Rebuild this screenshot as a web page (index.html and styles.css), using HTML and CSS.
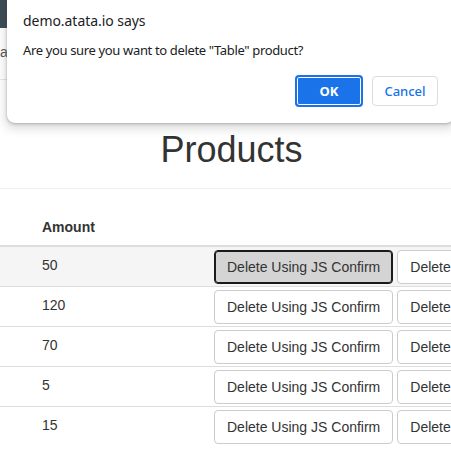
FILE: index.html
```html
<!DOCTYPE html>
<html lang="en">
<head>
    <meta charset="UTF-8">
    <title>Products</title>
    <link rel="stylesheet" href="styles.css">
</head>
<body>
    <div class="navbar"></div>
    <div class="subbar"><span class="crumb">al</span></div>

    <div class="main">
        <div class="page-header">
            <h1>Products</h1>
        </div>
        <table class="table">
            <colgroup>
                <col class="col-amount">
                <col class="col-actions">
            </colgroup>
            <thead>
                <tr>
                    <th class="amount">Amount</th>
                    <th></th>
                </tr>
            </thead>
            <tbody>
                <tr class="hover">
                    <td class="amount">50</td>
                    <td class="actions">
                        <div class="btns">
                            <button class="btn active">Delete Using JS Confirm</button>
                            <button class="btn">Delete Using Bootstrap Modal</button>
                        </div>
                    </td>
                </tr>
                <tr>
                    <td class="amount">120</td>
                    <td class="actions">
                        <div class="btns">
                            <button class="btn">Delete Using JS Confirm</button>
                            <button class="btn">Delete Using Bootstrap Modal</button>
                        </div>
                    </td>
                </tr>
                <tr>
                    <td class="amount">70</td>
                    <td class="actions">
                        <div class="btns">
                            <button class="btn">Delete Using JS Confirm</button>
                            <button class="btn">Delete Using Bootstrap Modal</button>
                        </div>
                    </td>
                </tr>
                <tr>
                    <td class="amount">5</td>
                    <td class="actions">
                        <div class="btns">
                            <button class="btn">Delete Using JS Confirm</button>
                            <button class="btn">Delete Using Bootstrap Modal</button>
                        </div>
                    </td>
                </tr>
                <tr>
                    <td class="amount">15</td>
                    <td class="actions">
                        <div class="btns">
                            <button class="btn">Delete Using JS Confirm</button>
                            <button class="btn">Delete Using Bootstrap Modal</button>
                        </div>
                    </td>
                </tr>
            </tbody>
        </table>
    </div>

    <!-- browser confirm dialog, drawn over the page -->
    <div class="dialog">
        <div class="dialog-title">demo.atata.io says</div>
        <div class="dialog-message">Are you sure you want to delete "Table" product?</div>
        <div class="dialog-buttons">
            <button class="dialog-ok">OK</button>
            <button class="dialog-cancel">Cancel</button>
        </div>
    </div>
</body>
</html>
```

FILE: styles.css
```css
body {
    font-family: 'Liberation Sans', Arial, sans-serif;
    font-size: 14px;
    line-height: 20px;
    color: #333;
    background: #fff;
    margin: 0;
    padding: 0;
    width: 451px;
    height: 469px;
    overflow: hidden;
    position: relative;
}
.navbar {
    height: 28px;
    background-color: #3c4a54;
}
.subbar {
    padding: 14px 0 17px;
    border-bottom: 1px solid #e7e7e7;
    color: #555;
}
.main {
    width: 463px;
}
.page-header {
    padding-bottom: 18px;
    border-bottom: 1px solid #eee;
    text-align: center;
}
.page-header h1 {
    margin: 50px 0 0;
    font-size: 36px;
    line-height: 1.1;
    font-weight: 500;
    color: #333;
}
.table {
    width: 463px;
    margin-top: 20px;
    border-collapse: collapse;
    table-layout: fixed;
}
.col-amount {
    width: 206px;
}
.table th {
    text-align: left;
    font-weight: bold;
    padding: 8px;
    border-bottom: 2px solid #ddd;
}
.table td {
    vertical-align: top;
    padding: 8px;
    border-top: 1px solid #ddd;
}
.table .amount {
    padding-left: 42px;
}
.table td.actions {
    padding: 3px 8px 2px;
}
.table tr.hover td {
    background-color: #f5f5f5;
}
.btns {
    display: flex;
    gap: 4px;
}
.btn {
    flex-shrink: 0;
    font-family: 'Liberation Sans', Arial, sans-serif;
    font-size: 14px;
    line-height: 20px;
    color: #333;
    background-color: #fff;
    border: 1px solid #ccc;
    border-radius: 4px;
    padding: 6px 12px;
    white-space: nowrap;
}
.btn.active {
    background-color: #d4d4d4;
    border-color: #1a1a1a;
    box-shadow: inset 0 0 0 1px #1a1a1a;
}
.dialog {
    position: absolute;
    top: 0;
    left: 7px;
    width: 447px;
    box-sizing: border-box;
    padding: 11px 16px 16px;
    background: #fff;
    border-radius: 0 0 8px 8px;
    box-shadow: 0 1px 3px rgba(60, 64, 67, 0.35), 0 4px 8px 3px rgba(60, 64, 67, 0.15);
    font-family: 'Noto Sans', 'Open Sans', sans-serif;
    color: #202124;
}
.dialog-title {
    font-size: 14px;
    line-height: 20px;
    letter-spacing: -0.05px;
}
.dialog-message {
    margin-top: 10px;
    font-size: 13px;
    line-height: 18px;
    letter-spacing: -0.35px;
}
.dialog-buttons {
    margin-top: 16px;
    display: flex;
    justify-content: flex-end;
    align-items: center;
    gap: 9px;
}
.dialog-buttons button {
    font-family: 'Noto Sans', 'Open Sans', sans-serif;
    font-size: 13px;
    border-radius: 4px;
    padding: 0;
}
.dialog-ok {
    width: 68px;
    height: 32px;
    font-weight: 700;
    color: #fff;
    background-color: #1a73e8;
    border: 2px solid #1a73e8;
    box-shadow: inset 0 0 0 1px #fff;
}
.dialog-cancel {
    width: 66px;
    height: 30px;
    font-weight: 500;
    color: #1a73e8;
    background-color: #fff;
    border: 1px solid #dadce0;
}
```
